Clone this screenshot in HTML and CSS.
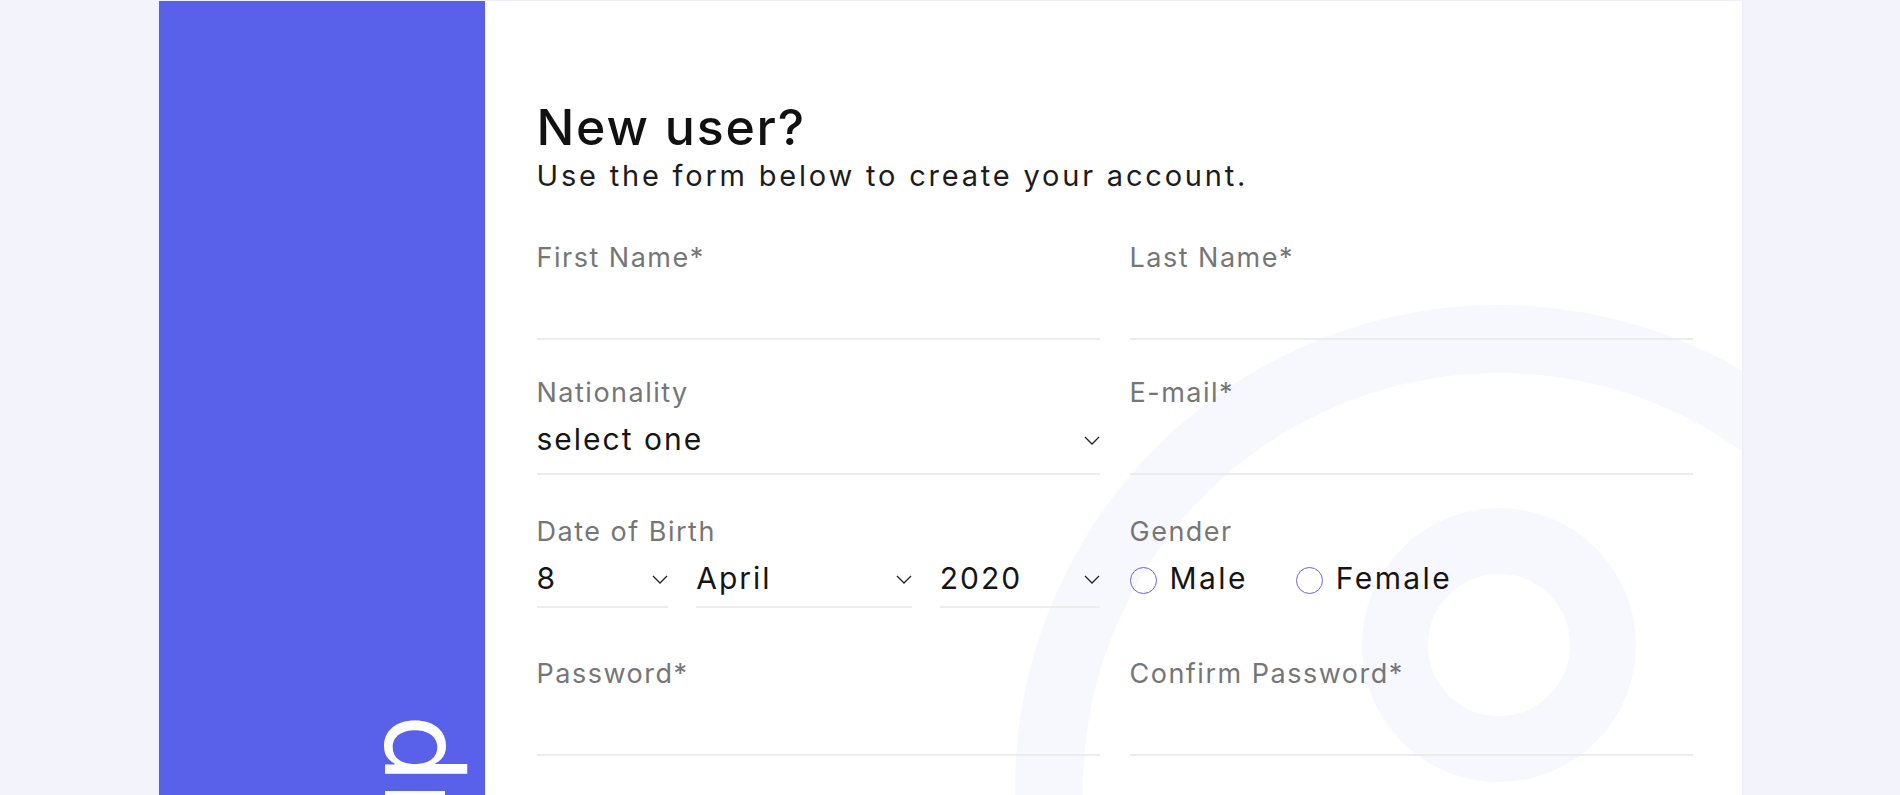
FILE: index.html
```html
<!DOCTYPE html>
<html lang="en">
<head>
<meta charset="utf-8">
<title>Sign up</title>
<link rel="stylesheet" href="styles.css">
</head>
<body>
<main class="page">
  <section class="card">
    <aside class="side">
      <span class="side-title">Sign up</span>
    </aside>
    <div class="form-area">
      <div class="deco deco-big"></div>
      <div class="deco deco-small"></div>
      <header class="intro">
        <h1 class="intro-title">New user?</h1>
        <p class="intro-text">Use the form below to create your account.</p>
      </header>
      <form class="fields">
        <div class="field">
          <label class="field-label">First Name*</label>
          <input class="field-input" type="text">
        </div>
        <div class="field">
          <label class="field-label">Last Name*</label>
          <input class="field-input" type="text">
        </div>
        <div class="field">
          <label class="field-label">Nationality</label>
          <div class="select">
            <span class="select-value">select one</span>
            <svg class="chev" width="16" height="9" viewBox="0 0 16 9"><path d="M1 1l7 7 7-7" fill="none" stroke="#222" stroke-width="1.3"/></svg>
          </div>
        </div>
        <div class="field">
          <label class="field-label">E-mail*</label>
          <input class="field-input" type="email">
        </div>
        <div class="field field-lower">
          <label class="field-label">Date of Birth</label>
          <div class="date-group">
            <div class="select select-short">
              <span class="select-value">8</span>
              <svg class="chev" width="16" height="9" viewBox="0 0 16 9"><path d="M1 1l7 7 7-7" fill="none" stroke="#222" stroke-width="1.3"/></svg>
            </div>
            <div class="select select-short">
              <span class="select-value">April</span>
              <svg class="chev" width="16" height="9" viewBox="0 0 16 9"><path d="M1 1l7 7 7-7" fill="none" stroke="#222" stroke-width="1.3"/></svg>
            </div>
            <div class="select select-short">
              <span class="select-value">2020</span>
              <svg class="chev" width="16" height="9" viewBox="0 0 16 9"><path d="M1 1l7 7 7-7" fill="none" stroke="#222" stroke-width="1.3"/></svg>
            </div>
          </div>
        </div>
        <div class="field field-lower">
          <label class="field-label">Gender</label>
          <div class="radios">
            <span class="radio"><span class="radio-dot"></span><span class="radio-text">Male</span></span>
            <span class="radio"><span class="radio-dot"></span><span class="radio-text">Female</span></span>
          </div>
        </div>
        <div class="field">
          <label class="field-label">Password*</label>
          <input class="field-input" type="password">
        </div>
        <div class="field">
          <label class="field-label">Confirm Password*</label>
          <input class="field-input" type="password">
        </div>
      </form>
    </div>
  </section>
</main>
</body>
</html>
```

FILE: styles.css
```css
html, body {
  margin: 0;
  height: 100%;
  overflow: hidden;
}

body {
  background: #f3f3fc;
  font-family: Inter, "Noto Sans", sans-serif;
  color: #151515;
}

.page {
  padding-top: 1px;
}

.card {
  display: flex;
  width: 1583px;
  margin: 0 auto;
  background: #ffffff;
  box-shadow: 0 0 3px rgba(0, 0, 0, 0.06);
}

.side {
  width: 326px;
  flex: none;
  background: #5961eb;
  display: flex;
  justify-content: flex-end;
  align-items: flex-start;
  padding-top: 714px;
  padding-right: 25px;
  box-sizing: border-box;
}

.side-title {
  writing-mode: vertical-rl;
  transform: rotate(180deg);
  font-size: 110px;
  line-height: 1;
  font-weight: 400;
  color: #ffffff;
  white-space: nowrap;
}

.form-area {
  flex: 1;
  position: relative;
  overflow: hidden;
  padding: 96px 49px 0 52px;
}

.deco {
  position: absolute;
  border-radius: 50%;
  border-style: solid;
  border-color: #f7f8fe;
  box-sizing: border-box;
}

.deco-big {
  left: 530px;
  top: 304px;
  width: 968px;
  height: 968px;
  border-width: 68px;
}

.deco-small {
  left: 877px;
  top: 507px;
  width: 274px;
  height: 274px;
  border-width: 66px;
}

.intro {
  position: relative;
}

.intro-title {
  margin: 0;
  font-size: 50px;
  line-height: 60px;
  font-weight: 500;
  letter-spacing: 1.8px;
  color: #111111;
}

.intro-text {
  margin: 2px 0 0;
  font-size: 29px;
  line-height: 34px;
  letter-spacing: 2.8px;
  color: #1c1c1c;
}

.fields {
  position: relative;
  margin-top: 50px;
  display: grid;
  grid-template-columns: 1fr 1fr;
  column-gap: 30px;
  row-gap: 38px;
}

.field {
  display: flex;
  flex-direction: column;
}

.field-lower {
  margin-top: 4px;
}

.field-label {
  font-size: 27px;
  line-height: 30px;
  letter-spacing: 1.5px;
  color: #767676;
}

.field-input {
  height: 67px;
  box-sizing: border-box;
  border: 0;
  border-bottom: 2px solid #ececec;
  background: transparent;
  padding: 0;
  font: inherit;
  font-size: 30px;
  outline: none;
}

.select {
  display: flex;
  align-items: center;
  justify-content: space-between;
  height: 67px;
  box-sizing: border-box;
  padding: 11px 0 14px;
  border-bottom: 2px solid #ececec;
}

.select-short {
  height: 61px;
  padding: 11px 0 8px;
}

.select-value {
  font-size: 30px;
  line-height: 40px;
  letter-spacing: 2px;
  color: #151515;
}

.chev {
  flex: none;
  margin-top: 3px;
}

.date-group {
  display: grid;
  grid-template-columns: 132fr 216fr 160fr;
  column-gap: 28px;
}

.radios {
  display: flex;
  align-items: center;
  column-gap: 48px;
  padding: 11px 0 23px;
}

.radio {
  display: flex;
  align-items: center;
  column-gap: 13px;
}

.radio-dot {
  width: 27px;
  height: 27px;
  box-sizing: border-box;
  border: 1.5px solid #6a62d6;
  border-radius: 50%;
  margin-top: 4px;
}

.radio-text {
  font-size: 30px;
  line-height: 40px;
  letter-spacing: 2.4px;
  color: #151515;
}
```
